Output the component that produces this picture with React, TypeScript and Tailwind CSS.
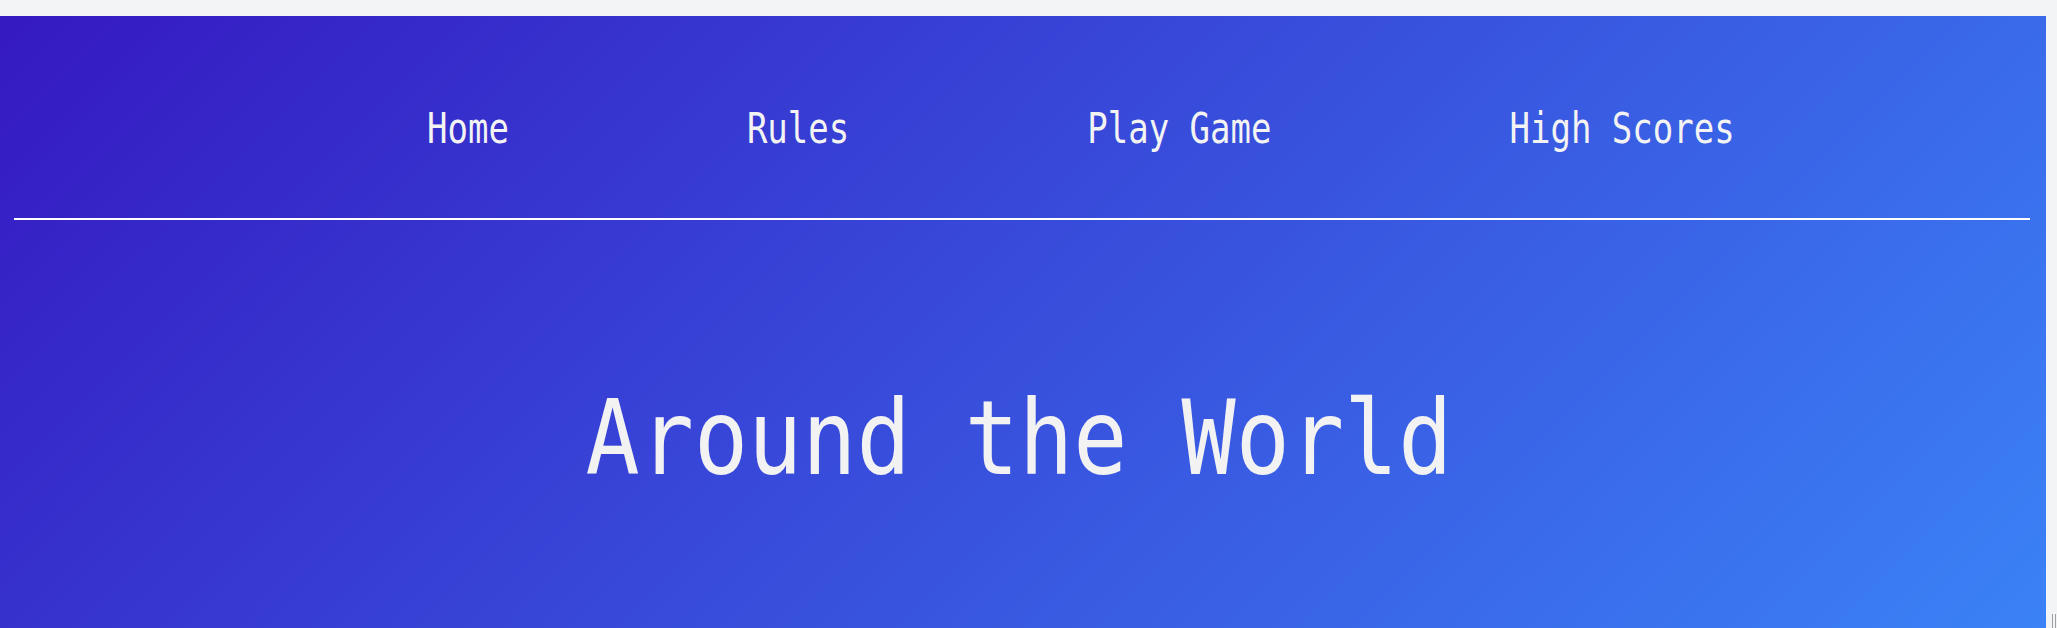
import React from "react";

const navItems = ["Home", "Rules", "Play Game", "High Scores"];

export default function App() {
  return (
    <div className="w-[2057px] h-[628px] bg-[#f3f4f5] flex flex-col overflow-hidden">
      <div className="h-[16px] shrink-0" />
      <div className="flex flex-1">
        <main className="w-[2046px] h-[612px] shrink-0 bg-[linear-gradient(135deg,#3519c1,#3b82f6)] flex flex-col font-['DejaVu_Sans_Mono',monospace] text-[#f3f3f3]">
          <nav className="h-[202px] pt-[95px] pl-[427px] flex items-start gap-[238px]">
            {navItems.map((t) => (
              <a
                key={t}
                href="#"
                className="block text-[34px] leading-[34px] h-[34px] whitespace-pre scale-y-125"
              >
                {t}
              </a>
            ))}
          </nav>
          <div className="h-[2px] bg-white ml-[14px] mr-[16px]" />
          <h1 className="mt-[173px] text-center text-[90px] leading-[90px] whitespace-pre scale-y-[1.15] pr-[8px] text-[#f2f2f2]">
            Around the World
          </h1>
        </main>
        <div className="flex-1 flex items-end justify-end">
          <div className="flex gap-[2px] mr-[1px]">
            <div className="w-[1px] h-[14px] bg-[#a0a0a0]" />
            <div className="w-[1px] h-[14px] bg-[#a0a0a0]" />
          </div>
        </div>
      </div>
    </div>
  );
}
